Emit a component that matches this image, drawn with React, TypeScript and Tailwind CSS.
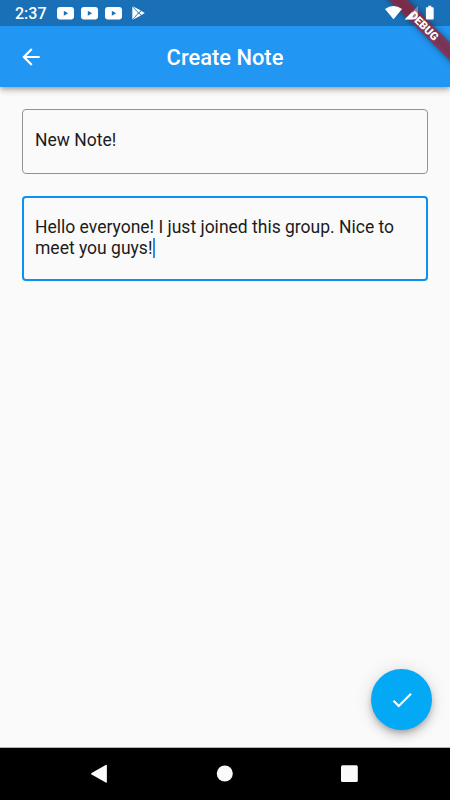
import { MdArrowBack, MdCheck } from "react-icons/md"

const YoutubeIcon = () => (
  <svg width="17" height="13" viewBox="0 0 17 13">
    <rect width="17" height="12.4" rx="3" fill="#fff" />
    <path d="M6.8 3.7v5l4.4-2.5z" fill="#1b72b8" />
  </svg>
)

const PlayStoreIcon = () => (
  <svg width="13" height="14" viewBox="0 0 13 14">
    <path d="M.3.5v13L6 7z" fill="#fff" />
    <path d="M.7.2 6.6 6.4 8.9 4.5z" fill="#fff" />
    <path d="M.7 13.8 6.6 7.6l2.3 1.9z" fill="#fff" />
    <path d="M9.5 4.9 7.2 7l2.3 2.1L12.8 7z" fill="#fff" />
  </svg>
)

// wifi, signal (partly filled), battery
const SystemIcons = () => (
  <svg width="52" height="26" viewBox="384 0 52 26" fill="#fff">
    <path d="M385 9.1Q393.5 3 402 9.1L393.5 19.2Z" />
    <path d="M418 6v13.4h-13.4z" fillOpacity=".35" />
    <path d="M412.6 11.4v8h-8z" />
    <path d="M426.9 7.3h1.4V5.8h3v1.5h1.4q1 0 1 1v10.3q0 1-1 1h-5.8q-1 0-1-1V8.3q0-1 1-1z" />
  </svg>
)

const DebugBanner = () => (
  <svg className="pointer-events-none absolute top-0 right-0 z-20" width="90" height="90" viewBox="0 0 90 90">
    <defs>
      <filter id="blur" x="-20%" y="-100%" width="140%" height="300%">
        <feGaussianBlur stdDeviation="3" />
      </filter>
    </defs>
    <g transform="translate(64.15 25.85) rotate(45)">
      <rect x="-60" y="-6.55" width="120" height="13.1" fill="#000" fillOpacity=".4" filter="url(#blur)" />
      <rect x="-60" y="-6.55" width="120" height="13.1" fill="#a82036" fillOpacity=".68" />
      <text
        y="4"
        textAnchor="middle"
        fill="#fff"
        className="font-['Roboto',sans-serif] text-[11.16px] font-black"
      >
        DEBUG
      </text>
    </g>
  </svg>
)

export default function App() {
  return (
    <div className="relative flex h-[800px] w-[450px] flex-col overflow-hidden bg-[#fafafa] font-['Roboto',sans-serif]">
      <header className="shrink-0 bg-[#2196f3] shadow-[0_2px_4px_-1px_rgba(0,0,0,0.2),0_4px_5px_rgba(0,0,0,0.14),0_1px_10px_rgba(0,0,0,0.12)]">
        <div className="flex h-[26px] items-center bg-[#1a70b6] pl-[15px] pr-[14px] text-white">
          <span className="w-[42px] text-[16px] leading-none font-medium pt-[2px]">2:37</span>
          <div className="flex items-center gap-[7px]">
            <YoutubeIcon />
            <YoutubeIcon />
            <YoutubeIcon />
          </div>
          <div className="ml-[10px]">
            <PlayStoreIcon />
          </div>
          <div className="relative z-30 ml-auto">
            <SystemIcons />
          </div>
        </div>
        <div className="grid h-[61px] grid-cols-[60px_1fr_60px] items-center text-white">
          <button className="pl-[17.5px]">
            <MdArrowBack size={26} />
          </button>
          <h1 className="pt-[2px] text-center text-[21.9px] leading-none font-medium">Create Note</h1>
        </div>
      </header>

      <main className="flex flex-1 flex-col gap-[22px] px-[22px] pt-[22px] text-[17.5px] leading-[20.5px] text-[#1c1c1c]">
        <div className="h-[65px] rounded-[4px] border border-[#929292] px-[12px] pt-[20px]">New Note!</div>
        <div className="h-[85px] rounded-[4px] border-2 border-[#0b91f0] px-[11px] pt-[19px]">
          Hello everyone! I just joined this group. Nice to meet you guys!
          <span className="-mt-[2px] ml-[0.5px] inline-block h-[20px] w-[2px] bg-[#2196f3] align-middle" />
        </div>
      </main>

      <button className="absolute right-[18px] bottom-[70px] flex size-[61px] items-center justify-center rounded-full bg-[#03a9f4] text-white shadow-[0_3px_5px_-1px_rgba(0,0,0,0.2),0_6px_10px_rgba(0,0,0,0.14),0_1px_18px_rgba(0,0,0,0.12)]">
        <MdCheck size={26} />
      </button>

      <nav className="flex h-[53px] shrink-0 items-center border-t border-[#b5b5b5] bg-black">
        <svg width="450" height="52" viewBox="0 748 450 52" fill="#fafafa">
          <path d="M91.6 773.1 105.7 765q1.2-.5 1.2.8v16q0 1.3-1.2.8L91.6 774.6q-1.2-.7 0-1.5z" />
          <circle cx="224.8" cy="773.5" r="8" />
          <rect x="341" y="765.2" width="16.8" height="16.8" rx="1.5" />
        </svg>
      </nav>

      <DebugBanner />
    </div>
  )
}
